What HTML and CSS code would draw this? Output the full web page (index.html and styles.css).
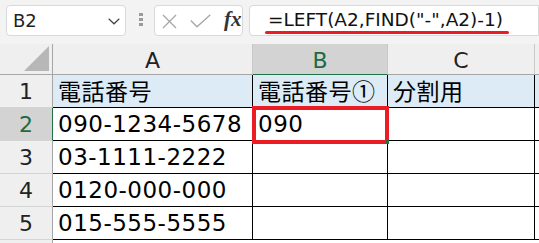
FILE: index.html
```html
<!DOCTYPE html>
<html lang="ja">
<head>
<meta charset="utf-8">
<title>Excel LEFT FIND</title>
<link rel="stylesheet" href="styles.css">
</head>
<body>
<div class="app">
  <div class="toolbar">
    <div class="namebox">
      <span class="ref">B2</span>
      <svg class="chev" width="12" height="7" viewBox="0 0 12 7"><path d="M0.7 0.7 L6 5.8 L11.3 0.7" fill="none" stroke="#444" stroke-width="1.2"/></svg>
    </div>
    <div class="grip"><i></i><i></i><i></i></div>
    <div class="funcbox">
      <svg class="ico-x" width="15" height="15" viewBox="0 0 15 15"><path d="M1 1 L14 14 M14 1 L1 14" stroke="#a6a6a6" stroke-width="1.3" fill="none"/></svg>
      <svg class="ico-ok" width="21" height="14" viewBox="0 0 21 14"><path d="M0.8 6.5 L7 12.8 L20.3 0.8" stroke="#a6a6a6" stroke-width="1.3" fill="none"/></svg>
      <span class="fx">fx</span>
    </div>
    <div class="formula">
      <span class="ftext">=LEFT(A2,FIND("-",A2)-1)</span>
      <span class="underline"></span>
    </div>
  </div>
  <div class="sheet">
    <div class="corner"><svg width="25" height="25" viewBox="0 0 25 25"><path d="M25 0 L25 25 L0 25 Z" fill="#b7b7b7"/></svg></div>
    <div class="hd">A</div>
    <div class="hd sel">B</div>
    <div class="hd">C</div>
    <div class="hd last"></div>

    <div class="rn">1</div>
    <div class="c blue jp">電話番号</div>
    <div class="c blue jp">電話番号①</div>
    <div class="c blue jp">分割用</div>
    <div class="d blue"></div>

    <div class="rn sel">2</div>
    <div class="c">090-1234-5678</div>
    <div class="c">090</div>
    <div class="c"></div>
    <div class="d"></div>

    <div class="rn">3</div>
    <div class="c">03-1111-2222</div>
    <div class="c"></div>
    <div class="c"></div>
    <div class="d"></div>

    <div class="rn">4</div>
    <div class="c">0120-000-000</div>
    <div class="c"></div>
    <div class="c"></div>
    <div class="d"></div>

    <div class="rn">5</div>
    <div class="c">015-555-5555</div>
    <div class="c"></div>
    <div class="c"></div>
    <div class="d"></div>

    <div class="rn"></div>
    <div class="e"></div>
    <div class="e"></div>
    <div class="e"></div>
    <div class="e"></div>

    <div class="selection"><span class="handle"></span></div>
  </div>
</div>
</body>
</html>
```
FILE: styles.css
```css
* { box-sizing: border-box; }
html, body { margin: 0; padding: 0; }
body {
  width: 539px;
  height: 243px;
  overflow: hidden;
  background: #ffffff;
  font-family: "DejaVu Sans", "Noto Sans CJK JP", sans-serif;
}
.app { width: 539px; height: 243px; overflow: hidden; }

/* ---------- toolbar ---------- */
.toolbar {
  height: 44px;
  background: #f3f3f3;
  display: flex;
  align-items: flex-start;
  padding: 5px 0 0 6px;
  white-space: nowrap;
}
.namebox {
  width: 124px;
  height: 31px;
  background: #fff;
  border: 1px solid #d9d9d9;
  border-radius: 4px;
  display: flex;
  align-items: center;
  justify-content: space-between;
  padding: 0 5px 0 6px;
}
.ref { font-size: 18px; color: #1f1f1f; line-height: 1; padding-top: 1px; }
.chev { margin-top: 1px; }
.grip {
  margin-left: 13px;
  padding-top: 8px;
  display: flex;
  flex-direction: column;
  gap: 2px;
}
.grip i { display: block; width: 4px; height: 3px; background: #9a9a9a; }
.funcbox {
  margin-left: 11px;
  width: 92px;
  height: 31px;
  background: #fff;
  border: 1px solid #d9d9d9;
  border-radius: 4px;
  display: flex;
  align-items: center;
  padding-left: 7px;
}
.ico-x { margin-top: 1px; }
.ico-ok { margin-left: 13px; margin-top: 1px; }
.fx {
  margin-left: 13px;
  font-family: "Liberation Serif", serif;
  font-style: italic;
  font-weight: bold;
  font-size: 21px;
  color: #333;
  line-height: 1;
  margin-top: -2px;
}
.formula {
  position: relative;
  margin-left: 6px;
  width: 300px;
  height: 31px;
  background: #fff;
  border: 1px solid #d9d9d9;
  border-radius: 4px 0 0 4px;
  display: flex;
  align-items: center;
  padding-left: 18px;
}
.ftext { font-size: 18.5px; color: #111; line-height: 1; }
.underline {
  position: absolute;
  left: 15px;
  top: 25px;
  width: 244px;
  height: 3px;
  border-radius: 2px;
  background: #ec1c24;
}

/* ---------- sheet ---------- */
.sheet {
  position: relative;
  display: grid;
  grid-template-columns: 53px 200px 135px 147px 1fr;
  grid-template-rows: 31px repeat(5, 33px) 10px;
  font-size: 23px;
  letter-spacing: 0.5px;
  color: #000;
}
.corner {
  background: #efefef;
  border-right: 1px solid #a6a6a6;
  border-bottom: 1px solid #a6a6a6;
  display: flex;
  align-items: flex-end;
  justify-content: flex-end;
  padding: 0 3px 3px 0;
}
.corner svg { display: block; }
.hd {
  background: #efefef;
  border-right: 1px solid #c8c8c8;
  border-bottom: 1px solid #a6a6a6;
  display: flex;
  align-items: center;
  justify-content: center;
  font-size: 22px;
  letter-spacing: 0;
  color: #222;
  padding-top: 2px;
}
.hd.sel {
  background: #d3d3d3;
  color: #1d6b40;
  border-bottom: 1px solid #217346;
}
.hd.last { border-right: none; }
.rn {
  background: #efefef;
  border-right: 1px solid #a6a6a6;
  border-bottom: 1px solid #d4d4d4;
  display: flex;
  align-items: center;
  justify-content: center;
  font-size: 22px;
  letter-spacing: 0;
  color: #222;
  padding-top: 1px;
}
.rn.sel {
  background: #d3d3d3;
  color: #1d6b40;
  border-right: 1px solid #217346;
}
.c {
  background: #fff;
  border-right: 1px solid #000;
  border-bottom: 1px solid #000;
  display: flex;
  align-items: flex-end;
  padding: 0 0 4px 5px;
  line-height: 23px;
  white-space: nowrap;
}
.jp { font-family: "Noto Sans CJK JP", sans-serif; padding-bottom: 5px; }
.d {
  background: #fff;
  border-bottom: 1px solid #000;
}
.blue { background: #ddebf7; }
.e { background: #fff; }

.selection {
  position: absolute;
  left: 252px;
  top: 62px;
  width: 137px;
  height: 38px;
  border: 4px solid #ec1c24;
}
.handle {
  position: absolute;
  right: -4px;
  bottom: -4px;
  width: 3px;
  height: 4px;
  background: #217346;
}
```
